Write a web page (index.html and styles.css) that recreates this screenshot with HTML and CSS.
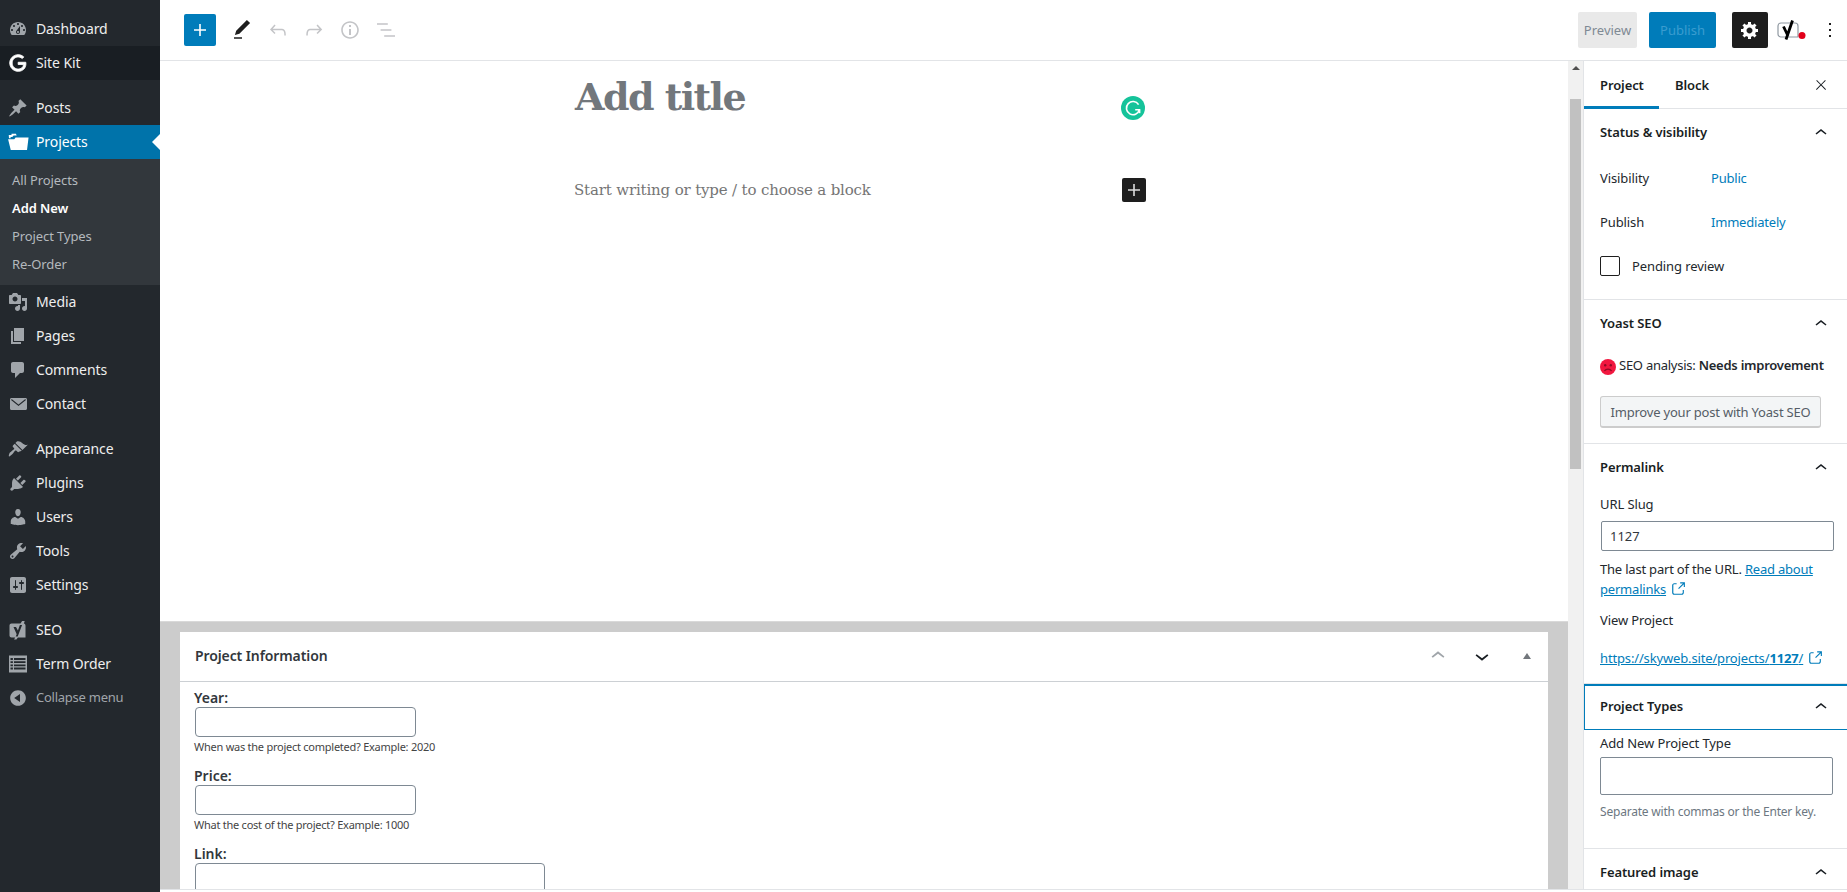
FILE: index.html
```html
<!DOCTYPE html>
<html lang="en">
<head>
    <meta charset="UTF-8">
    <title>Add New Project</title>
    <link rel="stylesheet" href="styles.css">
</head>
<body>
    <svg class="defs" width="0" height="0">
        <symbol id="chev-up" viewBox="0 0 24 24"><path d="M6.5 12.4L12 8l5.5 4.4-.9 1.2L12 10l-4.5 3.6-1-1.2z"/></symbol>
        <symbol id="chev-down" viewBox="0 0 24 24"><path d="M17.5 11.6L12 16l-5.5-4.4.9-1.2L12 14l4.5-3.6 1 1.2z"/></symbol>
        <symbol id="external" viewBox="0 0 24 24"><path d="M18.2 17c0 .7-.6 1.2-1.2 1.2H7c-.7 0-1.2-.6-1.2-1.2V7c0-.7.6-1.2 1.2-1.2h3.2V4.2H7C5.5 4.2 4.2 5.5 4.2 7v10c0 1.5 1.2 2.8 2.8 2.8h10c1.5 0 2.8-1.2 2.8-2.8v-3.6h-1.5V17zM14.9 3v1.5h3.7l-6.4 6.4 1.1 1.1 6.4-6.4v3.7h1.5V3h-6.8z"/></symbol>
    </svg>

    <div class="page">
        <!-- Admin menu -->
        <nav class="admin-menu">
            <a class="menu-item"><svg viewBox="0 0 20 20"><path fill-rule="evenodd" d="M3.76 16h12.48c1.1-1.37 1.76-3.11 1.76-5 0-4.42-3.58-8-8-8s-8 3.58-8 8c0 1.89.66 3.63 1.76 5zM10 4c.55 0 1 .45 1 1s-.45 1-1 1-1-.45-1-1 .45-1 1-1zM6 6c.55 0 1 .45 1 1s-.45 1-1 1-1-.45-1-1 .45-1 1-1zm8 0c.55 0 1 .45 1 1s-.45 1-1 1-1-.45-1-1 .45-1 1-1zm-5.37 5.55L12 7v6c0 1.1-.9 2-2 2s-2-.9-2-2c0-.57.24-1.08.63-1.45zM4 10c.55 0 1 .45 1 1s-.45 1-1 1-1-.45-1-1 .45-1 1-1zm12 0c.55 0 1 .45 1 1s-.45 1-1 1-1-.45-1-1 .45-1 1-1zm-5 3c0-.55-.45-1-1-1s-1 .45-1 1 .45 1 1 1 1-.45 1-1z"/></svg>Dashboard</a>
            <a class="menu-item menu-dark"><svg class="icon-white" viewBox="0 0 24 24"><path d="M21.35 11.1h-9.17v2.73h6.51c-.33 3.81-3.5 5.44-6.5 5.44C8.36 19.27 5 16.25 5 12c0-4.1 3.2-7.27 7.2-7.27 3.09 0 4.9 1.97 4.9 1.97L19 4.72S16.56 2 12.1 2C6.42 2 2.03 6.8 2.03 12c0 5.05 4.13 10 10.22 10 5.35 0 9.25-3.67 9.25-9.09 0-1.15-.15-1.81-.15-1.81z" stroke="#fff" stroke-width="1"/></svg>Site Kit</a>
            <div class="menu-sep"></div>
            <a class="menu-item"><svg viewBox="0 0 20 20"><path d="M10.44 3.02l1.82-1.82 6.36 6.35-1.83 1.82c-1.05-.68-2.48-.57-3.41.36l-.75.75c-.92.93-1.04 2.35-.35 3.41l-1.83 1.82-2.41-2.41-2.8 2.79c-.42.42-3.38 2.71-3.8 2.29s1.86-3.39 2.28-3.81l2.79-2.79L4.1 9.36l1.83-1.82c1.05.69 2.48.57 3.4-.36l.75-.75c.93-.92 1.05-2.35.36-3.41z"/></svg>Posts</a>
            <a class="menu-item menu-current"><svg class="icon-white icon-wide" viewBox="0 0 20 20"><path d="M1 7.4h5.6l1.2-1.5H19.6l-1.4 11.3H3.4z"/><path d="M1.6 3.6h2.5V2.4l4 .1.7 1.6H6L4.8 5.4H3.2l.2 1.2H1.8z"/></svg>Projects</a>
            <div class="submenu">
                <a class="sub-item">All Projects</a>
                <a class="sub-item sub-current">Add New</a>
                <a class="sub-item">Project Types</a>
                <a class="sub-item">Re-Order</a>
            </div>
            <a class="menu-item"><svg viewBox="0 0 20 20"><path fill-rule="evenodd" d="M13 11V4c0-.55-.45-1-1-1h-1.67L9 1H5L3.67 3H2c-.55 0-1 .45-1 1v7c0 .55.45 1 1 1h10c.55 0 1-.45 1-1zM7 4.5c1.38 0 2.5 1.12 2.5 2.5S8.38 9.5 7 9.5 4.5 8.38 4.5 7 5.62 4.5 7 4.5zM14 6h5v10.5c0 1.38-1.12 2.5-2.5 2.5S14 17.88 14 16.5s1.12-2.5 2.5-2.5c.17 0 .34.02.5.05V9h-3V6zm-4 8.05V13h2v3.5c0 1.38-1.12 2.5-2.5 2.5S7 17.88 7 16.5 8.12 14 9.5 14c.17 0 .34.02.5.05z"/></svg>Media</a>
            <a class="menu-item"><svg viewBox="0 0 20 20"><path d="M6 15V2h10v13H6zm-1 1h8v2H3V5h2v11z"/></svg>Pages</a>
            <a class="menu-item"><svg viewBox="0 0 20 20"><path d="M5 2h9c1.1 0 2 .9 2 2v7c0 1.1-.9 2-2 2h-2l-5 5v-5H5c-1.1 0-2-.9-2-2V4c0-1.1.9-2 2-2z"/></svg>Comments</a>
            <a class="menu-item"><svg viewBox="0 0 20 20"><path fill-rule="evenodd" d="M19 14.5v-9c0-.83-.67-1.5-1.5-1.5H3.49c-.83 0-1.5.67-1.5 1.5v9c0 .83.67 1.5 1.5 1.5H17.5c.83 0 1.5-.67 1.5-1.5zm-1.31-9.11c.33.33.15.67-.03.84L10.5 12 3.34 6.23c-.18-.17-.36-.51-.03-.84s.67-.17.95.07l6.24 5.04 6.25-5.04c.28-.24.62-.4.95-.07z"/></svg>Contact</a>
            <div class="menu-sep"></div>
            <a class="menu-item"><svg viewBox="0 0 20 20"><path d="M14.48 11.06L7.41 3.99l1.5-1.5c.5-.56 2.3-.47 3.51.32 1.21.8 1.43 1.28 2.91 2.1 1.18.64 2.45 1.26 4.45.85zm-.71.71L6.7 4.7 4.93 6.47c-.39.39-.39 1.02 0 1.41l1.06 1.06c.39.39.39 1.03 0 1.42-.6.6-1.43 1.11-2.21 1.69-.35.26-.7.53-1.01.84C1.43 13.23.78 15.6.78 17s2.37-.65 3.71-2c.31-.31.58-.66.84-1.01.58-.78 1.09-1.61 1.69-2.21.39-.39 1.02-.39 1.41 0l1.06 1.06c.39.39 1.02.39 1.41 0z"/></svg>Appearance</a>
            <a class="menu-item"><svg viewBox="0 0 20 20"><path d="M13.11 4.36L9.87 7.6 8 5.73l3.24-3.24c.35-.34 1.05-.2 1.56.32.52.51.66 1.21.31 1.55zm-8 1.77l.91-1.12 9.01 9.01-1.19.84c-.71.71-2.63 1.16-3.82 1.16H6.14L4.9 17.26c-.59.59-1.54.59-2.12 0-.59-.58-.59-1.53 0-2.12l1.24-1.24v-3.88c0-1.13.4-3.19 1.09-3.89zm7.26 3.97l3.24-3.24c.34-.35 1.04-.21 1.55.31.52.51.66 1.21.31 1.55l-3.24 3.25z"/></svg>Plugins</a>
            <a class="menu-item"><svg viewBox="0 0 20 20"><path d="M10 9.25c-2.27 0-2.73-3.44-2.73-3.44C7 4.02 7.82 2 9.97 2c2.16 0 2.98 2.02 2.71 3.81 0 0-.41 3.44-2.68 3.44zm0 2.57L12.72 10c2.39 0 4.52 2.33 4.52 4.53v2.49s-3.65 1.13-7.24 1.13c-3.65 0-7.24-1.13-7.24-1.13v-2.49c0-2.25 1.94-4.48 4.47-4.48z"/></svg>Users</a>
            <a class="menu-item"><svg viewBox="0 0 20 20"><path fill-rule="evenodd" d="M16.68 9.77c-1.34 1.34-3.3 1.67-4.95.99l-5.41 6.52c-.99.99-2.59.99-3.58 0s-.99-2.59 0-3.57l6.52-5.42c-.68-1.65-.35-3.61.99-4.95 1.28-1.28 3.12-1.62 4.72-1.06l-2.89 2.89 2.82 2.82 2.86-2.87c.53 1.58.18 3.39-1.08 4.65zM3.81 16.21c.4.39 1.04.39 1.43 0 .4-.4.4-1.04 0-1.43-.39-.4-1.03-.4-1.43 0-.39.39-.39 1.03 0 1.43z"/></svg>Tools</a>
            <a class="menu-item"><svg viewBox="0 0 20 20"><path fill-rule="evenodd" d="M18 16V4c0-1.1-.9-2-2-2H4c-1.1 0-2 .9-2 2v12c0 1.1.9 2 2 2h12c1.1 0 2-.9 2-2zM8 11h1c.55 0 1 .45 1 1s-.45 1-1 1H8v1.5c0 .28-.22.5-.5.5s-.5-.22-.5-.5V13H6c-.55 0-1-.45-1-1s.45-1 1-1h1V5.5c0-.28.22-.5.5-.5s.5.22.5.5V11zm5-2h-1c-.55 0-1-.45-1-1s.45-1 1-1h1V5.5c0-.28.22-.5.5-.5s.5.22.5.5V7h1c.55 0 1 .45 1 1s-.45 1-1 1h-1v5.5c0 .28-.22.5-.5.5s-.5-.22-.5-.5V9z"/></svg>Settings</a>
            <div class="menu-sep"></div>
            <a class="menu-item"><svg viewBox="0 0 20 20"><path fill-rule="evenodd" d="M3.5 3.5h9l1.6-2.4h2.6L15.9 3.6c1 .3 1.6 1.1 1.6 2.2v11.7H9.9L8.4 19.6H6l1.3-2.1H3.5c-1.1 0-2-.9-2-2v-10c0-1.1.9-2 2-2zm2 3.4l3.2 7.4-1 2.2h2l4.4-11.5h-2.2l-2 5.4-1.9-3.5z"/></svg>SEO</a>
            <a class="menu-item"><svg viewBox="0 0 20 20"><path fill-rule="evenodd" d="M1 1.5h18v17H1zM2.5 4h2.4v1.9H2.5zM6 4h11.5v1.9H6zM2.5 7.2h2.4v1.9H2.5zM6 7.2h11.5v1.9H6zM2.5 10.4h2.4v1.9H2.5zM6 10.4h11.5v1.9H6zM2.5 13.6h2.4v1.9H2.5zM6 13.6h11.5v1.9H6z"/></svg>Term Order</a>
            <a class="menu-item menu-collapse"><svg viewBox="0 0 20 20"><path fill-rule="evenodd" d="M10 2.16c4.33 0 7.84 3.51 7.84 7.84s-3.51 7.84-7.84 7.84S2.16 14.33 2.16 10 5.71 2.16 10 2.16zm2 11.72V6.12L6.18 9.97z"/></svg>Collapse menu</a>
        </nav>

        <div class="editor">
            <!-- Top toolbar -->
            <header class="topbar">
                <div class="tools">
                    <button class="btn-add"><svg viewBox="0 0 24 24"><path d="M18 11.2h-5.2V6h-1.6v5.2H6v1.6h5.2V18h1.6v-5.2H18z"/></svg></button>
                    <span class="tool"><svg viewBox="0 0 24 24"><path d="M20.1 5.1L16.9 2 6.2 12.7l-1.3 4.4 4.5-1.3L20.1 5.1zM4 20.8h8v-1.5H4v1.5z"/></svg></span>
                    <span class="tool tool-off"><svg viewBox="0 0 24 24"><path d="M18.3 11.7c-.6-.6-1.4-.9-2.3-.9H6.7l2.9-3.3-1.1-1-4.5 5L8.5 16l1-1-2.7-2.7H16c.5 0 .9.2 1.3.5 1 1 1 3.4 1 4.5v.3h1.5v-.2c0-1.5 0-4.3-1.5-5.7z"/></svg></span>
                    <span class="tool tool-off"><svg viewBox="0 0 24 24"><path d="M15.6 6.5l-1.1 1 2.9 3.3H8c-.9 0-1.7.3-2.3.9-1.4 1.5-1.4 4.2-1.4 5.6v.2h1.5v-.3c0-1.1 0-3.5 1-4.5.3-.3.7-.5 1.3-.5h9.2L14.5 15l1.1 1.1 4.6-4.6-4.6-5z"/></svg></span>
                    <span class="tool tool-off"><svg viewBox="0 0 24 24"><path d="M12 3.2c-4.8 0-8.8 3.9-8.8 8.8 0 4.8 3.9 8.8 8.8 8.8 4.8 0 8.8-3.9 8.8-8.8 0-4.8-4-8.8-8.8-8.8zm0 16c-4 0-7.2-3.3-7.2-7.2C4.8 8 8 4.8 12 4.8s7.2 3.3 7.2 7.2c0 4-3.2 7.2-7.2 7.2zM11 17h2v-6h-2v6zm0-8h2V7h-2v2z"/></svg></span>
                    <span class="tool tool-off"><svg viewBox="0 0 24 24"><path d="M13.8 5.2H3v1.5h10.8V5.2zm-3.6 12v1.5H21v-1.5H10.2zm7.2-6H6.6v1.5h10.8v-1.5z"/></svg></span>
                </div>
                <div class="actions">
                    <button class="btn-preview">Preview</button>
                    <button class="btn-publish">Publish</button>
                    <button class="btn-settings"><svg viewBox="0 0 20 20"><path fill-rule="evenodd" d="M18 12h-2.18c-.17.7-.44 1.35-.81 1.93l1.54 1.54-2.1 2.1-1.54-1.54c-.58.36-1.23.63-1.91.79V19H8v-2.18c-.68-.16-1.33-.43-1.91-.79l-1.54 1.54-2.12-2.12 1.54-1.54c-.36-.58-.63-1.23-.79-1.91H1V9.03h2.17c.16-.7.44-1.35.8-1.94L2.43 5.55l2.1-2.1 1.54 1.54c.58-.37 1.24-.64 1.93-.81V2h3v2.18c.68.16 1.33.43 1.91.79l1.54-1.54 2.12 2.12-1.54 1.54c.36.59.64 1.24.8 1.94H18V12zm-8.5 1.5c1.66 0 3-1.34 3-3s-1.34-3-3-3-3 1.34-3 3 1.34 3 3 3z"/></svg></button>
                    <span class="yoast-toggle"><svg viewBox="0 0 30 24">
                        <path class="yoast-box" d="M4 5h14a3 3 0 0 1 3 3v11H4a3 3 0 0 1-3-3V8a3 3 0 0 1 3-3z"/>
                        <path class="yoast-y" d="M6.5 8.5l4.5 9.5M15.5 2.5L9 21.5"/>
                        <circle class="yoast-dot" cx="25" cy="17.5" r="3.5"/>
                    </svg></span>
                    <span class="more"><svg viewBox="0 0 24 24"><path d="M13 19h-2v-2h2v2zm0-6h-2v-2h2v2zm0-6h-2V5h2v2z"/></svg></span>
                </div>
            </header>

            <div class="workspace">
                <main class="content">
                    <div class="canvas">
                        <div class="canvas-column">
                            <h1 class="post-title">Add title</h1>
                            <span class="grammarly"><svg viewBox="0 0 24 24">
                                <circle cx="12" cy="12" r="12"/>
                                <path d="M17.6 8.6A6.6 6.6 0 1 0 18.4 13.8H14.2"/>
                                <path d="M18.6 13.8v3.4"/>
                            </svg></span>
                            <div class="block-row">
                                <p class="block-hint">Start writing or type / to choose a block</p>
                                <button class="btn-block"><svg viewBox="0 0 24 24"><path d="M18 11.2h-5.2V6h-1.6v5.2H6v1.6h5.2V18h1.6v-5.2H18z"/></svg></button>
                            </div>
                        </div>
                    </div>
                    <div class="metaboxes">
                        <section class="metabox">
                            <div class="metabox-head">
                                <h2>Project Information</h2>
                                <div class="metabox-ctrl">
                                    <svg class="ctrl-off"><use href="#chev-up"/></svg>
                                    <svg><use href="#chev-down"/></svg>
                                    <span class="ctrl-tri"></span>
                                </div>
                            </div>
                            <div class="metabox-body">
                                <label class="field-label">Year:</label>
                                <input class="field-input" type="text">
                                <p class="field-desc">When was the project completed? Example: 2020</p>
                                <label class="field-label">Price:</label>
                                <input class="field-input" type="text">
                                <p class="field-desc">What the cost of the project? Example: 1000</p>
                                <label class="field-label">Link:</label>
                                <input class="field-input field-wide" type="text">
                            </div>
                        </section>
                    </div>
                </main>

                <div class="scrollbar">
                    <span class="scroll-arrow"></span>
                    <div class="scroll-thumb"></div>
                </div>

                <!-- Settings sidebar -->
                <aside class="settings">
                    <div class="tabs">
                        <span class="tab tab-active">Project</span>
                        <span class="tab">Block</span>
                        <svg class="tab-close" viewBox="0 0 24 24"><path d="M13 11.8l6.1-6.3-1-1-6.1 6.2-6.1-6.2-1 1 6.1 6.3-6.5 6.7 1 1 6.5-6.6 6.5 6.6 1-1z"/></svg>
                    </div>

                    <section class="panel panel-status">
                        <div class="panel-head"><h3>Status &amp; visibility</h3><svg><use href="#chev-up"/></svg></div>
                        <div class="panel-row"><span>Visibility</span><a>Public</a></div>
                        <div class="panel-row"><span>Publish</span><a>Immediately</a></div>
                        <label class="check-row"><span class="check"></span>Pending review</label>
                    </section>

                    <section class="panel panel-yoast">
                        <div class="panel-head"><h3>Yoast SEO</h3><svg><use href="#chev-up"/></svg></div>
                        <div class="seo-score">
                            <svg viewBox="0 0 16 16">
                                <circle class="face" cx="8" cy="8" r="8"/>
                                <circle class="eye" cx="5.2" cy="6.2" r="1.2"/>
                                <circle class="eye" cx="10.8" cy="6.2" r="1.2"/>
                                <path class="mouth" d="M4.4 12c1.6-2.4 5.6-2.4 7.2 0"/>
                            </svg>
                            <span>SEO analysis: <b>Needs improvement</b></span>
                        </div>
                        <button class="btn-improve">Improve your post with Yoast SEO</button>
                    </section>

                    <section class="panel panel-permalink">
                        <div class="panel-head"><h3>Permalink</h3><svg><use href="#chev-up"/></svg></div>
                        <label class="slug-label">URL Slug</label>
                        <input class="slug-input" type="text" value="1127">
                        <p class="slug-help">The last part of the URL. <a class="link">Read about</a><br><a class="link">permalinks</a><svg class="ext"><use href="#external"/></svg></p>
                        <p class="view-label">View Project</p>
                        <p class="view-link"><a class="link">https://skyweb.site/projects/<b>1127</b>/</a><svg class="ext"><use href="#external"/></svg></p>
                    </section>

                    <section class="panel panel-types">
                        <div class="panel-head panel-head-focus"><h3>Project Types</h3><svg><use href="#chev-up"/></svg></div>
                        <label class="type-label">Add New Project Type</label>
                        <input class="type-input" type="text">
                        <p class="type-help">Separate with commas or the Enter key.</p>
                    </section>

                    <section class="panel panel-image">
                        <div class="panel-head"><h3>Featured image</h3><svg><use href="#chev-up"/></svg></div>
                    </section>
                </aside>
            </div>

            <footer class="statusline"></footer>
        </div>
    </div>
</body>
</html>
```

FILE: styles.css
```css
* {
    box-sizing: border-box;
}
html, body {
    height: 100%;
}
body {
    margin: 0;
    overflow: hidden;
    font-family: "Noto Sans", sans-serif;
    font-size: 13px;
    color: #23282d;
    background-color: #fff;
}
h1, h2, h3, p {
    margin: 0;
}
button {
    font-family: inherit;
    border: none;
    padding: 0;
}
input {
    display: block;
    font-family: inherit;
    background-color: #fff;
    border: 1px solid #7e8993;
    border-radius: 4px;
    outline: none;
}
.defs {
    display: block;
    height: 0;
}
.page {
    display: flex;
    height: 892px;
}

/* Admin menu */
.admin-menu {
    width: 160px;
    flex-shrink: 0;
    padding-top: 12px;
    background-color: #23282d;
}
.menu-item {
    display: flex;
    align-items: center;
    height: 34px;
    padding-bottom: 2px;
    font-size: 14px;
    color: #eee;
    letter-spacing: -0.1px;
}
.menu-item svg {
    width: 20px;
    height: 20px;
    margin: 2px 8px 0;
    fill: #a0a5aa;
    flex-shrink: 0;
}
.menu-item .icon-white {
    fill: #fff;
}
.menu-item .icon-wide {
    width: 22px;
    height: 22px;
    margin: 2px 7px 0;
}
.menu-dark {
    background-color: #191e23;
}
.menu-sep {
    height: 11px;
}
.menu-current {
    position: relative;
    background-color: #0073aa;
    color: #fff;
}
.menu-current::after {
    content: "";
    position: absolute;
    right: 0;
    top: 9px;
    border: 8px solid transparent;
    border-right-color: #fff;
    border-left-width: 0;
}
.submenu {
    padding: 7px 0;
    background-color: #32373c;
}
.sub-item {
    display: flex;
    align-items: center;
    height: 28px;
    padding-left: 12px;
    font-size: 13px;
    color: #b4b9be;
    letter-spacing: -0.1px;
}
.sub-current {
    font-weight: 600;
    color: #fff;
}
.menu-collapse {
    color: #a0a5aa;
    font-size: 13px;
    letter-spacing: -0.25px;
}

/* Top bar */
.editor {
    flex: 1;
    min-width: 0;
    display: flex;
    flex-direction: column;
}
.topbar {
    display: flex;
    justify-content: space-between;
    align-items: center;
    height: 61px;
    flex-shrink: 0;
    padding: 0 0 1px 24px;
    border-bottom: 1px solid #e2e4e7;
}
.tools {
    display: flex;
    align-items: center;
}
.btn-add {
    display: flex;
    align-items: center;
    justify-content: center;
    width: 32px;
    height: 32px;
    margin-right: 8px;
    background-color: #007cba;
    border-radius: 2px;
}
.btn-add svg {
    width: 24px;
    height: 24px;
    fill: #fff;
}
.tool {
    display: flex;
    justify-content: center;
    width: 36px;
}
.tool svg {
    width: 24px;
    height: 24px;
    fill: #1e1e1e;
}
.tool-off svg {
    fill: #c3c4c7;
}
.actions {
    display: flex;
    align-items: center;
}
.btn-preview {
    width: 59px;
    height: 36px;
    margin-right: 12px;
    font-size: 13px;
    color: #7f8a94;
    background-color: #e9e9e9;
    border-radius: 2px;
}
.btn-publish {
    width: 67px;
    height: 36px;
    margin-right: 16px;
    font-size: 13px;
    color: #3a9cd0;
    background-color: #007cba;
    border-radius: 2px;
}
.btn-settings {
    display: flex;
    align-items: center;
    justify-content: center;
    width: 36px;
    height: 36px;
    margin-right: 9px;
    background-color: #1e1e1e;
    border-radius: 2px;
}
.btn-settings svg {
    width: 20px;
    height: 20px;
    fill: #fff;
}
.yoast-toggle svg {
    display: block;
    width: 30px;
    height: 24px;
    fill: none;
}
.yoast-box {
    stroke: #8f98a1;
    stroke-width: 1.2;
}
.yoast-y {
    stroke: #000;
    stroke-width: 2.8;
}
.yoast-dot {
    fill: #e2001a;
}
.more {
    display: flex;
    width: 24px;
    margin: 0 5px 0 11px;
}
.more svg {
    width: 24px;
    height: 24px;
    fill: #1e1e1e;
}

/* Main area */
.workspace {
    flex: 1;
    min-height: 0;
    display: flex;
}
.content {
    flex: 1;
    min-width: 0;
    display: flex;
    flex-direction: column;
    overflow: hidden;
}
.canvas {
    height: 560px;
    flex-shrink: 0;
}
.canvas-column {
    position: relative;
    width: 578px;
    margin: 0 auto;
}
.post-title {
    padding-top: 11px;
    font-family: "DejaVu Serif", serif;
    font-size: 38px;
    line-height: 50px;
    font-weight: 700;
    color: #72777c;
    letter-spacing: -1.55px;
}
.grammarly {
    position: absolute;
    left: 546px;
    top: 35px;
}
.grammarly svg {
    display: block;
    width: 24px;
    height: 24px;
    fill: #15c39a;
}
.grammarly path {
    fill: none;
    stroke: #fff;
    stroke-width: 1.6;
}
.block-row {
    display: flex;
    justify-content: space-between;
    align-items: center;
    margin-top: 56px;
    padding-right: 7px;
}
.block-hint {
    margin-left: -1px;
    font-family: "DejaVu Serif", serif;
    font-size: 15px;
    color: #757575;
    letter-spacing: -0.16px;
}
.btn-block {
    display: flex;
    width: 24px;
    height: 24px;
    background-color: #1e1e1e;
    border-radius: 2px;
}
.btn-block svg {
    width: 24px;
    height: 24px;
    fill: #ddd;
}
.metaboxes {
    flex: 1;
    min-height: 0;
    padding: 10px 20px 0;
    background-color: #ccc;
    border-top: 1px solid #d9d9d9;
}
.metabox {
    height: 100%;
    background-color: #fff;
}
.metabox-head {
    display: flex;
    justify-content: space-between;
    align-items: center;
    height: 50px;
    padding: 0 9px 0 15px;
    border-bottom: 1px solid #ccd0d4;
}
.metabox-head h2 {
    padding-bottom: 3px;
    font-size: 14px;
    font-weight: 600;
    color: #32373c;
    letter-spacing: -0.1px;
}
.metabox-ctrl {
    display: flex;
    align-items: center;
    gap: 16px;
    padding-bottom: 2px;
}
.metabox-ctrl svg {
    width: 28px;
    height: 28px;
    fill: #191e23;
}
.metabox-ctrl .ctrl-off {
    fill: #a0a5aa;
}
.ctrl-tri {
    width: 0;
    margin: 0 8px 0 11px;
    border: 4px solid transparent;
    border-top-width: 0;
    border-bottom: 6px solid #72777c;
}
.metabox-body {
    padding: 6px 14px 0;
}
.field-label {
    display: block;
    font-size: 14px;
    font-weight: 600;
    line-height: 19px;
    color: #32373c;
}
.field-input {
    width: 221px;
    height: 30px;
    margin-left: 1px;
}
.field-wide {
    width: 350px;
}
.field-desc {
    margin: 1px 0 10px;
    font-size: 11px;
    line-height: 18px;
    color: #444;
    letter-spacing: -0.25px;
}

/* Scrollbar */
.scrollbar {
    width: 15px;
    flex-shrink: 0;
    padding: 0 2px;
    background-color: #f1f1f1;
}
.scroll-arrow {
    display: block;
    width: 0;
    margin: 5px 0 0 2px;
    border: 4px solid transparent;
    border-top-width: 0;
    border-bottom: 4px solid #505050;
}
.scroll-thumb {
    height: 370px;
    margin-top: 29px;
    background-color: #c1c1c1;
}

/* Settings sidebar */
.settings {
    width: 264px;
    flex-shrink: 0;
    overflow: hidden;
    border-left: 1px solid #e2e4e7;
    letter-spacing: -0.1px;
}
.tabs {
    display: flex;
    align-items: center;
    height: 48px;
    border-bottom: 1px solid #e2e4e7;
}
.tab {
    display: flex;
    align-items: center;
    height: 48px;
    padding: 0 16px;
    font-weight: 600;
    color: #191e23;
}
.tab-active {
    width: 75px;
    border-bottom: 3px solid #007cba;
    padding-top: 3px;
}
.tab-close {
    width: 16px;
    height: 16px;
    margin-left: auto;
    margin-right: 18px;
    fill: #191e23;
}
.panel {
    padding: 0 16px;
    border-bottom: 1px solid #e2e4e7;
}
.panel-head {
    display: flex;
    justify-content: space-between;
    align-items: center;
    height: 48px;
}
.panel-head h3 {
    padding-bottom: 2px;
    font-size: 13px;
    font-weight: 600;
    color: #191e23;
}
.panel-head svg {
    width: 24px;
    height: 24px;
    margin-right: -2px;
    fill: #191e23;
}
.panel-status {
    height: 191px;
}
.panel-row {
    display: flex;
    align-items: center;
    height: 44px;
    padding-bottom: 2px;
}
.panel-row span {
    width: 111px;
}
.panel-row a {
    color: #007cba;
    letter-spacing: -0.2px;
}
.check-row {
    display: flex;
    align-items: center;
    height: 20px;
    margin-top: 11px;
}
.check {
    width: 20px;
    height: 20px;
    margin-right: 12px;
    border: 1px solid #1e1e1e;
    border-radius: 2px;
}
.panel-yoast {
    height: 144px;
}
.seo-score {
    display: flex;
    align-items: center;
    height: 20px;
    margin-top: 7px;
}
.seo-score svg {
    width: 16px;
    height: 16px;
    margin-top: 3px;
    margin-right: 3px;
}
.face {
    fill: #f1173f;
}
.eye {
    fill: #8f0a24;
}
.mouth {
    fill: none;
    stroke: #8f0a24;
    stroke-width: 1.2;
}
.seo-score span {
    white-space: nowrap;
    font-size: 13px;
    letter-spacing: -0.25px;
}
.seo-score b {
    font-weight: 600;
}
.btn-improve {
    display: block;
    width: 221px;
    height: 32px;
    margin-top: 21px;
    font-size: 13px;
    color: #555d66;
    background-color: #f3f5f6;
    border: 1px solid #ccc;
    border-bottom-width: 2px;
    border-radius: 3px;
    letter-spacing: -0.2px;
}
.panel-permalink {
    height: 240px;
}
.slug-label {
    display: block;
    margin-top: 3px;
    line-height: 18px;
}
.slug-input {
    width: 233px;
    height: 30px;
    margin: 8px 0 0 1px;
    padding: 0 8px;
    font-size: 13px;
    color: #32373c;
    border-radius: 2px;
}
.slug-help {
    margin-top: 8px;
    line-height: 20px;
    letter-spacing: -0.2px;
}
.link {
    color: #007cba;
    text-decoration: underline;
}
.ext {
    width: 18px;
    height: 18px;
    margin-left: 3px;
    vertical-align: -4px;
    fill: #007cba;
}
.view-label {
    margin-top: 12px;
    line-height: 18px;
}
.view-link {
    margin-top: 20px;
    line-height: 18px;
    white-space: nowrap;
    letter-spacing: -0.15px;
}
.panel-types {
    height: 165px;
}
.panel-head-focus {
    height: 46px;
    margin: 0 -16px;
    padding: 0 16px 0 15px;
    border: 1px solid #007cba;
    border-right-width: 0;
    box-shadow: inset 0 1px 0 #007cba;
}
.type-label {
    display: block;
    margin-top: 4px;
    line-height: 18px;
}
.type-input {
    width: 233px;
    height: 38px;
    margin-top: 5px;
    border-radius: 2px;
}
.type-help {
    margin-top: 8px;
    font-size: 12px;
    line-height: 18px;
    color: #6c7781;
    letter-spacing: -0.2px;
}
.panel-image {
    border-bottom: none;
}

/* Bottom line */
.statusline {
    height: 3px;
    flex-shrink: 0;
    background-color: #fff;
    border-top: 1px solid #e2e4e7;
}
```
